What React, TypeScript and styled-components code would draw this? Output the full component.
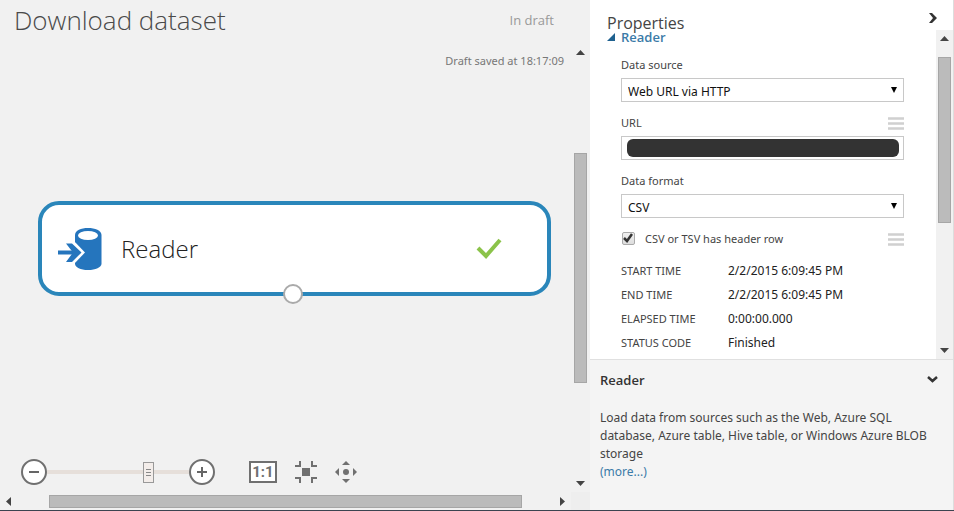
import React from "react";
import styled, { createGlobalStyle } from "styled-components";

const GlobalStyle = createGlobalStyle`
  *, *::before, *::after { box-sizing: border-box; }
  body {
    margin: 0;
    background: #f1f1f1;
    color: #333;
    font: 12px/16px "Noto Sans", "Open Sans", sans-serif;
  }
  button, input, select { font: inherit; color: inherit; margin: 0; }
  h1, h2, h3, p, dl, dd, dt { margin: 0; }
`;

const Shell = styled.div`
  display: grid;
  grid-template-columns: minmax(0, 1fr) 364px;
  min-height: 100vh;
  border-bottom: 1px solid #3b4450;
`;

const Workspace = styled.main`
  display: flex;
  flex-direction: column;
  background: #f1f1f1;
`;

const WorkspaceHeader = styled.header`
  display: flex;
  align-items: center;
  justify-content: space-between;
  height: 44px;
  padding: 0 36px 4px 14px;
`;

const Title = styled.h1`
  font-family: "Open Sans", sans-serif;
  font-size: 26px;
  line-height: 36px;
  font-weight: 300;
  color: #4a4a4a;
`;

const DraftStatus = styled.span`
  font-family: "Open Sans", sans-serif;
  font-size: 13px;
  color: #999;
`;

const WorkspaceBody = styled.div`
  flex: 1;
  display: grid;
  grid-template-columns: minmax(0, 1fr) 19px;
  grid-template-rows: minmax(0, 1fr) 18px;
`;

const Canvas = styled.section`
  display: flex;
  flex-direction: column;
`;

const SavedNote = styled.p`
  padding: 9px 7px 0;
  text-align: right;
  font-size: 11px;
  color: #777;
`;

const ModuleNode = styled.article`
  position: relative;
  display: flex;
  flex: none;
  align-items: center;
  height: 95px;
  margin: 132px 20px 0 38px;
  padding: 0 45px 0 15px;
  background: #fff;
  border: 4px solid #2a86ba;
  border-radius: 21px;
`;

const ModuleName = styled.h2`
  flex: 1;
  margin-left: 18px;
  font-family: "Open Sans", sans-serif;
  font-size: 24px;
  line-height: 32px;
  font-weight: 300;
  color: #222;
`;

const OutputPort = styled.button`
  position: absolute;
  left: 50%;
  bottom: -12px;
  width: 20px;
  height: 20px;
  margin-left: -12px;
  padding: 0;
  background: #fff;
  border: 2px solid #aaa;
  border-radius: 50%;
`;

const Toolbar = styled.div`
  display: flex;
  align-items: center;
  height: 28px;
  margin: auto 0 6px 20px;
`;

const IconButton = styled.button<{ $gap?: number }>`
  display: flex;
  flex: none;
  padding: 0;
  margin-left: ${(p) => p.$gap ?? 0}px;
  border: 0;
  background: none;
`;

const ZoomSlider = styled.input`
  appearance: none;
  width: 142px;
  height: 22px;
  margin: 0 -1px;
  background: linear-gradient(#e6dfda, #e6dfda) center / 100% 4px no-repeat;
  &::-webkit-slider-thumb {
    appearance: none;
    width: 11px;
    height: 21px;
    border: 1px solid #999;
    background:
      linear-gradient(#888, #888) center 6px / 5px 1px no-repeat,
      linear-gradient(#888, #888) center 9px / 5px 1px no-repeat,
      linear-gradient(#888, #888) center 12px / 5px 1px no-repeat,
      #f3edea;
  }
`;

const ScrollTrack = styled.div<{ $horizontal?: boolean }>`
  display: flex;
  flex-direction: ${(p) => (p.$horizontal ? "row" : "column")};
  align-items: center;
  justify-content: space-between;
  background: #f1f1f1;
`;

const ScrollSpace = styled.div<{ $grow: number }>`
  flex: ${(p) => p.$grow} 0 0;
`;

const ScrollThumb = styled.div<{ $grow: number; $horizontal?: boolean }>`
  flex: ${(p) => p.$grow} 0 0;
  ${(p) => (p.$horizontal ? "height: 13px;" : "width: 13px;")}
  background: #bbb;
  border: 1px solid #a6a6a6;
`;

const ScrollCorner = styled.div`
  background: #eee;
`;

const Sidebar = styled.aside`
  display: flex;
  flex-direction: column;
  background: #fff;
  border-right: 1px solid #ddd;
`;

const SidebarHeader = styled.header`
  display: flex;
  justify-content: space-between;
  height: 30px;
  padding: 11px 15px 0 17px;
`;

const SidebarTitle = styled.h2`
  font-family: "Open Sans", sans-serif;
  font-size: 16px;
  line-height: 24px;
  font-weight: 400;
  color: #444;
`;

const PropertiesScroller = styled.div`
  flex: 1;
  display: grid;
  grid-template-columns: minmax(0, 1fr) 17px;
`;

const PropertyForm = styled.form`
  padding: 0 32px 4px 31px;
`;

const GroupTitle = styled.h3`
  display: flex;
  align-items: center;
  gap: 6px;
  height: 14px;
  margin: 0 0 13px -14px;
  font-family: "Open Sans", sans-serif;
  font-size: 13px;
  font-weight: 600;
  color: #3b7ba8;
`;

const Field = styled.div`
  margin-bottom: 13px;
`;

const FieldHead = styled.div`
  display: flex;
  align-items: center;
  justify-content: space-between;
  height: 16px;
  margin-bottom: 5px;
`;

const FieldLabel = styled.label`
  font-size: 11px;
  color: #444;
`;

const SelectBox = styled.div`
  display: grid;
  align-items: center;
  height: 24px;
  border: 1px solid #c8c8c8;
  & > * { grid-area: 1 / 1; }
  & > svg { justify-self: end; margin-right: 5px; pointer-events: none; }
`;

const Select = styled.select`
  appearance: none;
  height: 22px;
  padding: 3px 20px 0 6px;
  border: 0;
  border-radius: 0;
  background: #fff;
  font-size: 12px;
  color: #111;
`;

const UrlBox = styled.div`
  display: flex;
  height: 24px;
  padding: 2px 4px 2px 5px;
  border: 1px solid #c8c8c8;
`;

const UrlInput = styled.input`
  flex: 1;
  min-width: 0;
  border: 0;
  border-radius: 6px;
  background: #333;
`;

const CheckRow = styled.div`
  display: flex;
  align-items: center;
  height: 16px;
  margin-bottom: 12px;
`;

const Checkbox = styled.input`
  appearance: none;
  width: 13px;
  height: 13px;
  margin: 0 10px 2px 1px;
  border: 1px solid #aaa;
  border-radius: 2px;
  background: linear-gradient(#f0f0f0, #ddd);
`;

const CheckboxWrap = styled.span`
  display: grid;
  flex: none;
  & > * { grid-area: 1 / 1; }
  & > svg { margin: 1px 0 0 2px; pointer-events: none; }
`;

const CheckLabel = styled(FieldLabel)`
  flex: 1;
`;

const Facts = styled.dl`
  display: grid;
  grid-template-columns: 107px 1fr;
  line-height: 24px;
`;

const FactName = styled.dt`
  color: #444;
  font-size: 11px;
`;

const FactValue = styled.dd`
  color: #222;
  font-size: 12px;
`;

const HelpPanel = styled.section`
  height: 151px;
  padding: 10px 15px 0 10px;
  background: #f4f4f4;
  border-top: 1px solid #e0e0e0;
`;

const HelpHeader = styled.header`
  display: flex;
  align-items: center;
  justify-content: space-between;
  height: 20px;
  margin-bottom: 19px;
`;

const HelpTitle = styled.h3`
  font-family: "Open Sans", sans-serif;
  font-size: 13px;
  font-weight: 600;
`;

const HelpText = styled.p`
  font-size: 12px;
  line-height: 18px;
  color: #444;
`;

const MoreLink = styled.a`
  display: block;
  color: #3b7ba8;
  text-decoration: none;
`;

const arrowPoints = {
  up: "4,7 8.5,2 13,7",
  down: "4,2 8.5,7 13,2",
  left: "7,4 2,8.5 7,13",
  right: "2,4 7,8.5 2,13",
};

function ScrollArrow({ dir }: { dir: keyof typeof arrowPoints }) {
  const vertical = dir === "up" || dir === "down";
  const [w, h] = vertical ? [17, 9] : [9, 17];
  return (
    <svg width={w} height={h} viewBox={`0 0 ${w} ${h}`} aria-hidden="true">
      <polygon points={arrowPoints[dir]} fill="#444" />
    </svg>
  );
}

const ArrowCell = styled.button<{ $size: number; $horizontal?: boolean }>`
  display: flex;
  flex: none;
  align-items: center;
  justify-content: center;
  padding: 0;
  border: 0;
  background: none;
  ${(p) => (p.$horizontal ? `width: ${p.$size}px; height: 17px;` : `height: ${p.$size}px; width: 17px;`)}
`;

function MenuLines() {
  return (
    <svg width="16" height="14" viewBox="0 0 16 14" aria-hidden="true">
      <path d="M0 2.500h16M0 7.500h16M0 12.500h16" stroke="#d0d0d0" strokeWidth="2.600" />
    </svg>
  );
}

function SelectArrow() {
  return (
    <svg width="8" height="8" viewBox="0 0 8 8" aria-hidden="true">
      <path d="M1 1h6L4 7z" fill="#000" />
    </svg>
  );
}

function DatabaseIcon() {
  return (
    <svg width="46" height="46" viewBox="0 0 46 46" aria-hidden="true">
      <path d="M18 9C18 4.500 24 2 31 2s13.500 2.500 13.500 7v28.500c0 4-6 6.500-13.500 6.500s-13-2.500-13-6.500z" fill="#2575bd" />
      <ellipse cx="31" cy="9.500" rx="10" ry="4.500" fill="#fff" />
      <path d="M7 14.500h9.500L28 26.500 16.500 38.500H7z" fill="#fff" />
      <path d="M1 26.500h19" stroke="#2575bd" strokeWidth="4" />
      <path d="M9 17.500h6l9.500 9-9.500 9.500H9l7-9.500z" fill="#2575bd" />
    </svg>
  );
}

function DoneIcon() {
  return (
    <svg width="26" height="22" viewBox="0 0 26 22" aria-label="Finished">
      <path d="M2 10l8 8L24 2" fill="none" stroke="#8bc34a" strokeWidth="4" />
    </svg>
  );
}

function ZoomIcon({ plus }: { plus?: boolean }) {
  return (
    <svg width="28" height="28" viewBox="0 0 28 28" aria-hidden="true">
      <circle cx="14" cy="14" r="12" fill="#fff" stroke="#707070" strokeWidth="2" />
      <path d={plus ? "M9 14h10M14 9v10" : "M9 14h10"} stroke="#666" strokeWidth="2" />
    </svg>
  );
}

const ActualSize = styled.button`
  width: 28px;
  height: 22px;
  margin-left: 33px;
  padding: 0;
  border: 2px solid #707070;
  background: #fff;
  color: #707070;
  font-family: Roboto, sans-serif;
  font-size: 15px;
  line-height: 18px;
  font-weight: 700;
`;

function FitIcon() {
  return (
    <svg width="22" height="22" viewBox="0 0 22 22" aria-hidden="true">
      <path d="M0 5h5V0M17 0v5h5M0 17h5v5M22 17h-5v5" fill="none" stroke="#707070" strokeWidth="2" />
      <path d="M7 7h8v8H7z" fill="#707070" />
    </svg>
  );
}

function PanIcon() {
  return (
    <svg width="24" height="24" viewBox="0 0 24 24" aria-hidden="true">
      <circle cx="12" cy="12" r="3" fill="#707070" />
      <path d="M12 1l4 4H8zM12 23l4-4H8zM1 12l4-4v8zM23 12l-4-4v8z" fill="#707070" />
    </svg>
  );
}

const facts = [
  ["START TIME", "2/2/2015 6:09:45 PM"],
  ["END TIME", "2/2/2015 6:09:45 PM"],
  ["ELAPSED TIME", "0:00:00.000"],
  ["STATUS CODE", "Finished"],
];

export default function App() {
  return (
    <>
      <GlobalStyle />
      <Shell>
        <Workspace>
          <WorkspaceHeader>
            <Title>Download dataset</Title>
            <DraftStatus>In draft</DraftStatus>
          </WorkspaceHeader>
          <WorkspaceBody>
            <Canvas>
              <SavedNote>Draft saved at 18:17:09</SavedNote>
              <ModuleNode>
                <DatabaseIcon />
                <ModuleName>Reader</ModuleName>
                <DoneIcon />
                <OutputPort type="button" aria-label="Output port" />
              </ModuleNode>
              <Toolbar>
                <IconButton type="button" aria-label="Zoom out">
                  <ZoomIcon />
                </IconButton>
                <ZoomSlider type="range" aria-label="Zoom" min={0} max={100} defaultValue={73} />
                <IconButton type="button" aria-label="Zoom in">
                  <ZoomIcon plus />
                </IconButton>
                <ActualSize type="button">1:1</ActualSize>
                <IconButton type="button" aria-label="Fit to window" $gap={18}>
                  <FitIcon />
                </IconButton>
                <IconButton type="button" aria-label="Pan" $gap={17}>
                  <PanIcon />
                </IconButton>
              </Toolbar>
            </Canvas>
            <ScrollTrack>
              <ArrowCell type="button" aria-label="Scroll up" $size={17}><ScrollArrow dir="up" /></ArrowCell>
              <ScrollSpace $grow={93} />
              <ScrollThumb $grow={229} />
              <ScrollSpace $grow={93} />
              <ArrowCell type="button" aria-label="Scroll down" $size={17}><ScrollArrow dir="down" /></ArrowCell>
            </ScrollTrack>
            <ScrollTrack $horizontal>
              <ArrowCell type="button" aria-label="Scroll left" $size={17} $horizontal><ScrollArrow dir="left" /></ArrowCell>
              <ScrollSpace $grow={32} />
              <ScrollThumb $grow={473} $horizontal />
              <ScrollSpace $grow={32} />
              <ArrowCell type="button" aria-label="Scroll right" $size={17} $horizontal><ScrollArrow dir="right" /></ArrowCell>
            </ScrollTrack>
            <ScrollCorner />
          </WorkspaceBody>
        </Workspace>

        <Sidebar>
          <SidebarHeader>
            <SidebarTitle>Properties</SidebarTitle>
            <IconButton type="button" aria-label="Collapse properties">
              <svg width="9" height="14" viewBox="0 0 9 14" aria-hidden="true">
                <path d="M0 2h3l5 5-5 5H0l4-5z" fill="#333" />
              </svg>
            </IconButton>
          </SidebarHeader>
          <PropertiesScroller>
            <PropertyForm>
              <GroupTitle>
                <svg width="8" height="8" viewBox="0 0 8 8" aria-hidden="true">
                  <path d="M8 0v8H0z" fill="#1f618f" />
                </svg>
                Reader
              </GroupTitle>
              <Field>
                <FieldHead>
                  <FieldLabel htmlFor="source">Data source</FieldLabel>
                </FieldHead>
                <SelectBox>
                  <Select id="source">
                    <option>Web URL via HTTP</option>
                  </Select>
                  <SelectArrow />
                </SelectBox>
              </Field>
              <Field>
                <FieldHead>
                  <FieldLabel htmlFor="url">URL</FieldLabel>
                  <IconButton type="button" aria-label="URL options"><MenuLines /></IconButton>
                </FieldHead>
                <UrlBox>
                  <UrlInput id="url" type="text" />
                </UrlBox>
              </Field>
              <Field>
                <FieldHead>
                  <FieldLabel htmlFor="format">Data format</FieldLabel>
                </FieldHead>
                <SelectBox>
                  <Select id="format">
                    <option>CSV</option>
                  </Select>
                  <SelectArrow />
                </SelectBox>
              </Field>
              <CheckRow>
                <CheckboxWrap>
                  <Checkbox id="header-row" type="checkbox" defaultChecked />
                  <svg width="10" height="10" viewBox="0 0 10 10" aria-hidden="true">
                    <path d="M1 5l3 3 5-7" fill="none" stroke="#333" strokeWidth="2.500" />
                  </svg>
                </CheckboxWrap>
                <CheckLabel htmlFor="header-row">CSV or TSV has header row</CheckLabel>
                <IconButton type="button" aria-label="Header row options"><MenuLines /></IconButton>
              </CheckRow>
              <Facts>
                {facts.map(([name, value]) => (
                  <React.Fragment key={name}>
                    <FactName>{name}</FactName>
                    <FactValue>{value}</FactValue>
                  </React.Fragment>
                ))}
              </Facts>
            </PropertyForm>
            <ScrollTrack>
              <ArrowCell type="button" aria-label="Scroll up" $size={17}><ScrollArrow dir="up" /></ArrowCell>
              <ScrollSpace $grow={10} />
              <ScrollThumb $grow={165} />
              <ScrollSpace $grow={120} />
              <ArrowCell type="button" aria-label="Scroll down" $size={17}><ScrollArrow dir="down" /></ArrowCell>
            </ScrollTrack>
          </PropertiesScroller>
          <HelpPanel>
            <HelpHeader>
              <HelpTitle>Reader</HelpTitle>
              <IconButton type="button" aria-label="Collapse help">
                <svg width="11" height="8" viewBox="0 0 11 8" aria-hidden="true">
                  <path d="M1 1l4.500 4L10 1" fill="none" stroke="#333" strokeWidth="2.500" />
                </svg>
              </IconButton>
            </HelpHeader>
            <HelpText>
              Load data from sources such as the Web, Azure SQL database, Azure table, Hive table, or Windows Azure BLOB storage
              <MoreLink href="#more">(more...)</MoreLink>
            </HelpText>
          </HelpPanel>
        </Sidebar>
      </Shell>
    </>
  );
}
